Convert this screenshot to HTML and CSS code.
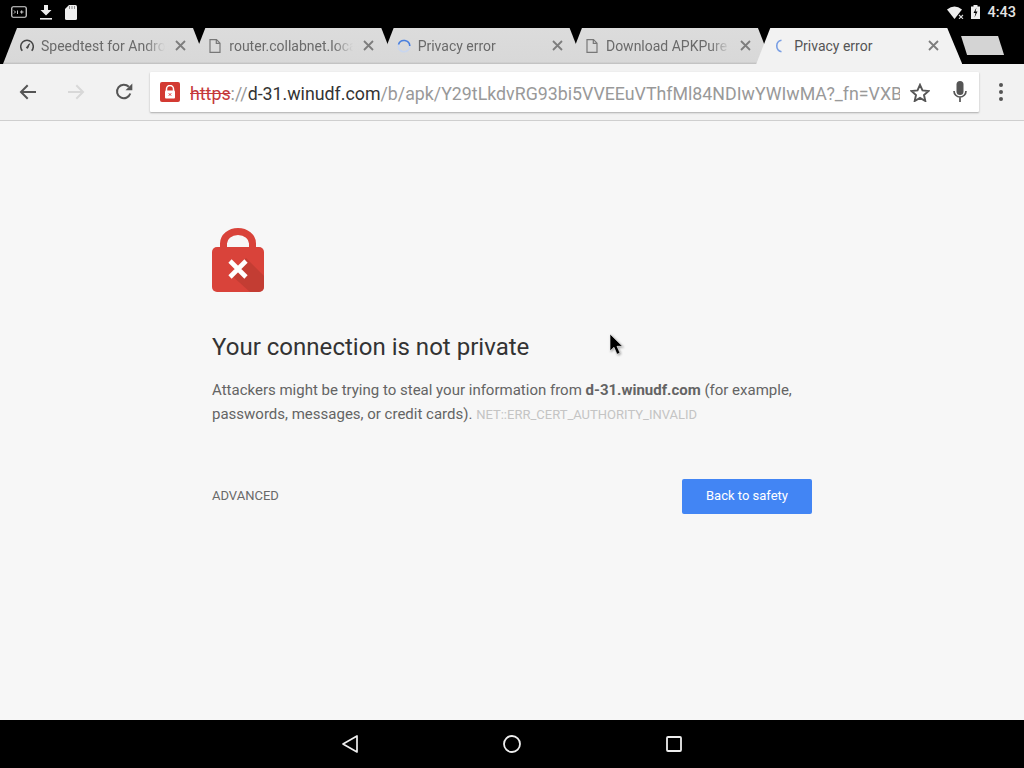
FILE: index.html
```html
<!DOCTYPE html>
<html lang="en">
<head>
<meta charset="utf-8">
<title>Privacy error</title>
<link rel="stylesheet" href="styles.css">
</head>
<body>
<div class="screen">
  <header class="statusbar">
    <div class="status-left">
      <svg class="s-term" width="16" height="12" viewBox="0 0 16 12"><rect x=".75" y=".75" width="14.5" height="10.5" rx="1.5" fill="none" stroke="#ddd" stroke-width="1.2"/><path d="M3 4.500l1.500 1.500L3 7.500M6.500 4.500v3.500M9 6h3.500M10.700 4.300v3.400" fill="none" stroke="#ddd" stroke-width=".9"/></svg>
      <svg width="12" height="15" viewBox="0 0 12 15"><path d="M4 0h4v5h3.500L6 10.500.5 5H4z" fill="#eee"/><rect y="13" width="12" height="1.600" fill="#eee"/></svg>
      <svg width="12" height="15" viewBox="0 0 12 15"><path d="M4 0h6.500A1.500 1.500 0 0 1 12 1.500v12a1.500 1.500 0 0 1-1.500 1.500h-9A1.500 1.500 0 0 1 0 13.500V4z" fill="#eee"/><path d="M4.500 1v3M7 1v3M9.500 1v3" stroke="#777" stroke-width=".8"/></svg>
    </div>
    <div class="status-right">
      <svg width="17" height="13" viewBox="0 0 17 13"><path d="M0 3.500Q7.500-2.500 15 3.500L7.500 13z" fill="#eee"/><path d="M12 9l4 3.800M16 9l-4 3.800" stroke="#ddd" stroke-width="1.100"/></svg>
      <svg width="9" height="14" viewBox="0 0 9 14"><path d="M0 1.500h2.500V0h4v1.500H9V14H0z" fill="#eee"/><path d="M5.500 2.500L2.500 8h2l-1 4.500 3-6h-2z" fill="#000"/></svg>
      <span class="clock">4:43</span>
    </div>
  </header>

  <nav class="tabstrip">
    <div class="tab">
      <svg class="fav" width="14" height="14" viewBox="0 0 14 14"><path d="M2.300 11.700a6.300 6.300 0 1 1 9.400 0" fill="none" stroke="#444" stroke-width="1.500"/><path d="M6.300 8.700L9.500 4.700 7.700 9.300z" fill="#444" stroke="#444"/></svg>
      <span class="tab-title">Speedtest for Android</span>
      <svg class="close" width="11" height="11" viewBox="0 0 11 11"><path d="M1 1l9 9M10 1l-9 9"/></svg>
    </div>
    <div class="tab">
      <svg class="fav" width="12" height="14" viewBox="0 0 12 14"><path d="M1 .7h6.500L11 4.200v9.100H1zM7.300.7v3.700H11" fill="none" stroke="#777" stroke-width="1.200"/></svg>
      <span class="tab-title">router.collabnet.local</span>
      <svg class="close" width="11" height="11" viewBox="0 0 11 11"><path d="M1 1l9 9M10 1l-9 9"/></svg>
    </div>
    <div class="tab">
      <svg class="fav" width="14" height="14" viewBox="0 0 14 14"><circle cx="7" cy="7" r="5.800" fill="none" stroke="#c9d6ee" stroke-width="1.500"/><path d="M1.500 5.500A5.800 5.800 0 0 1 12.800 7" fill="none" stroke="#4a7fdc" stroke-width="1.600"/></svg>
      <span class="tab-title">Privacy error</span>
      <svg class="close" width="11" height="11" viewBox="0 0 11 11"><path d="M1 1l9 9M10 1l-9 9"/></svg>
    </div>
    <div class="tab">
      <svg class="fav" width="12" height="14" viewBox="0 0 12 14"><path d="M1 .7h6.500L11 4.200v9.100H1zM7.300.7v3.700H11" fill="none" stroke="#777" stroke-width="1.200"/></svg>
      <span class="tab-title">Download APKPure</span>
      <svg class="close" width="11" height="11" viewBox="0 0 11 11"><path d="M1 1l9 9M10 1l-9 9"/></svg>
    </div>
    <div class="tab tab-active">
      <svg class="fav" width="14" height="14" viewBox="0 0 14 14"><path d="M8.500 1.300A5.800 5.800 0 0 0 8.500 12.700" fill="none" stroke="#7a9fe4" stroke-width="1.600"/></svg>
      <span class="tab-title">Privacy error</span>
      <svg class="close" width="11" height="11" viewBox="0 0 11 11"><path d="M1 1l9 9M10 1l-9 9"/></svg>
    </div>
    <div class="newtab"></div>
  </nav>

  <div class="toolbar">
    <div class="nav-btns">
      <svg width="18" height="16" viewBox="0 0 18 16"><path d="M17 8H2.500M8.700 1.300L2 8l6.700 6.700" fill="none" stroke="#555" stroke-width="2"/></svg>
      <svg width="18" height="16" viewBox="0 0 18 16"><path d="M1 8h14.500M9.300 1.300L16 8l-6.700 6.700" fill="none" stroke="#d8d8d8" stroke-width="2"/></svg>
      <svg width="18" height="18" viewBox="0 0 18 18"><path d="M15.300 10.500A6.800 6.800 0 1 1 13.800 3.800" fill="none" stroke="#555" stroke-width="2"/><path d="M10.500 7.300h6.800V.5z" fill="#555"/></svg>
    </div>
    <div class="omnibox">
      <span class="chip"><svg width="12" height="14" viewBox="0 0 12 14"><path d="M2.500 6V4a3.500 3.500 0 0 1 7 0v2" fill="none" stroke="#fff" stroke-width="1.500"/><rect x="1" y="5.500" width="10" height="8" rx="1" fill="#fff"/><path d="M4.800 8.300l2.400 2.400M7.200 8.300l-2.400 2.400" stroke="#d33" stroke-width="1"/></svg></span>
      <div class="url"><span class="scheme">https</span><span class="rest">://</span><span class="host">d-31.winudf.com</span><span class="rest">/b/apk/Y29tLkdvRG93bi5VVEEuVThfMl84NDIwYWIwMA?_fn=VXBkYXRl</span></div>
      <svg class="star" width="20" height="19" viewBox="0 0 20 19"><path d="M10 1.800l2.500 5.600 6 .6-4.500 4 1.300 6L10 14.900 4.700 18l1.300-6-4.500-4 6-.6z" fill="none" stroke="#555" stroke-width="1.900" stroke-linejoin="miter"/></svg>
      <svg class="mic" width="14" height="22" viewBox="0 0 14 22"><rect x="3.500" y="0" width="7" height="14" rx="3.500" fill="#555"/><path d="M1 10a6 6 0 0 0 12 0M7 16v5" fill="none" stroke="#555" stroke-width="1.700"/></svg>
    </div>
    <div class="menu"><i></i><i></i><i></i></div>
  </div>

  <main class="page">
    <div class="interstitial">
      <svg class="lock" width="52" height="64" viewBox="0 0 52 64">
        <path d="M11.500 24V15.500a14.500 12 0 0 1 29 0V24" fill="none" stroke="#d9433a" stroke-width="7"/>
        <rect y="19" width="52" height="45" rx="5" fill="#d9433a"/>
        <path d="M34 30l18 18v11a5 5 0 0 1-5 5H38L18 46z" fill="#b93a30" opacity=".7"/>
        <path d="M18 33l16 16M34 33L18 49" stroke="#fff" stroke-width="4.600"/>
      </svg>
      <h1 class="headline">Your connection is not private</h1>
      <p class="message">Attackers might be trying to steal your information from <strong>d-31.winudf.com</strong> (for example, passwords, messages, or credit cards). <span class="code">NET::ERR_CERT_AUTHORITY_INVALID</span></p>
      <div class="actions">
        <span class="advanced">ADVANCED</span>
        <button class="safety">Back to safety</button>
      </div>
    </div>
    <svg class="cursor" width="16" height="24" viewBox="0 0 16 24"><path d="M1 1v17l4-3.700 3 7 3-1.300-3-6.700h5.500z" fill="#000" stroke="#fff" stroke-width=".6"/></svg>
  </main>

  <footer class="navbar">
    <svg width="16" height="18" viewBox="0 0 16 18"><path d="M15 1v16L1 9z" fill="none" stroke="#eee" stroke-width="1.700" stroke-linejoin="round"/></svg>
    <svg width="18" height="18" viewBox="0 0 18 18"><circle cx="9" cy="9" r="8" fill="none" stroke="#eee" stroke-width="1.800"/></svg>
    <svg width="16" height="16" viewBox="0 0 16 16"><rect x="1" y="1" width="14" height="14" rx="1" fill="none" stroke="#eee" stroke-width="1.800"/></svg>
  </footer>
</div>
</body>
</html>
```

FILE: styles.css
```css
* { box-sizing: border-box; }
html, body { margin: 0; padding: 0; }
body { font-family: Roboto, "Liberation Sans", sans-serif; background: #000; }

.screen { width: 1024px; height: 768px; display: flex; flex-direction: column; overflow: hidden; }

.statusbar { height: 28px; background: #000; display: flex; justify-content: space-between; align-items: center; padding: 0 8px 4px 11px; flex: none; }
.status-left { display: flex; align-items: center; gap: 13px; }
.status-right { display: flex; align-items: center; gap: 7px; }
.clock { color: #e4e4e4; font-size: 14.500px; font-weight: 500; }

.tabstrip { height: 36px; background: #000; display: flex; padding-left: 3px; flex: none; }
.tab {
  width: 204px; height: 36px; margin-right: -15.700px; flex: none;
  display: flex; align-items: center; padding: 0 21px 0 17px;
  background: linear-gradient(#dcdcdc, #d8d8d8 94%, #bdbdbd);
  clip-path: polygon(14px 0, 190px 0, 204px 36px, 0 36px);
  position: relative; font-size: 14px; color: #6a6a6a;
}
.tab-active { background: #f2f2f2; color: #555; width: 206px; padding-right: 23px; clip-path: polygon(14px 0, 191px 0, 206px 36px, 0 36px); }
.fav { flex: none; margin-right: 7px; width: 14px; }
.tab-title {
  flex: 1; min-width: 0; white-space: nowrap; overflow: hidden;
  -webkit-mask-image: linear-gradient(to right, #000 84%, transparent);
  mask-image: linear-gradient(to right, #000 84%, transparent);
}
.tab-active .tab-title { -webkit-mask-image: none; mask-image: none; }
.close { flex: none; margin-left: 10px; margin-bottom: 2px; }
.close path { fill: none; stroke: #7d7d7d; stroke-width: 1.800; }
.newtab {
  width: 43px; height: 19px; margin: 8px 0 0 14.500px; flex: none;
  background: #d4d4d4; clip-path: polygon(0 0, 37px 0, 43px 19px, 6px 19px);
}

.toolbar { height: 57px; background: #f2f2f2; border-bottom: 1px solid #cfcfcf; display: flex; align-items: flex-start; padding-top: 8px; flex: none; }
.nav-btns { width: 150px; height: 40px; display: flex; align-items: center; gap: 30px; padding-left: 19px; flex: none; }
.omnibox {
  width: 829px; height: 40px; background: #fff; display: flex; align-items: center; flex: none;
  box-shadow: 0 1px 2px rgba(0,0,0,.3); padding-left: 10px; border-radius: 1px;
}
.chip { width: 20px; height: 20px; background: #d33a32; border-radius: 2px; display: flex; align-items: center; justify-content: center; flex: none; margin-right: 10px; }
.url { width: 710px; flex: none; white-space: nowrap; overflow: hidden; font-size: 17.800px; color: #999; margin-top: 2px; }
.scheme { color: #c5393a; text-decoration: line-through; }
.host { color: #333; }
.star { flex: none; margin-left: 10px; }
.mic { flex: none; margin-left: 23px; }
.menu { width: 44px; height: 40px; display: flex; flex-direction: column; align-items: center; justify-content: center; gap: 3px; }
.menu i { width: 4px; height: 4px; border-radius: 50%; background: #555; }

.page { flex: 1; background: #f7f7f7; position: relative; padding: 107px 0 0 212px; }
.interstitial { width: 600px; color: #646464; }
.lock { display: block; }
.headline { margin: 39px 0 0; font-size: 24.050px; line-height: 32px; font-weight: 400; color: #333; }
.message { margin: 15px 0 0; font-size: 15px; line-height: 24px; }
.message strong { font-weight: 700; }
.code { font-size: 13px; color: #c4c4c4; }
.actions { margin-top: 52px; display: flex; justify-content: space-between; align-items: center; }
.advanced { font-size: 13px; color: #696969; margin-bottom: 2px; }
.safety { width: 130px; height: 35px; border: 0; border-radius: 2px; background: #4285f4; color: #fff; font: 400 13px Roboto, sans-serif; padding: 0 0 2px; }
.cursor { position: absolute; left: 609px; top: 212px; filter: drop-shadow(1px 1px 1px rgba(0,0,0,.35)); }

.navbar { height: 48px; background: #000; display: flex; align-items: center; justify-content: center; gap: 145px; flex: none; }
```
